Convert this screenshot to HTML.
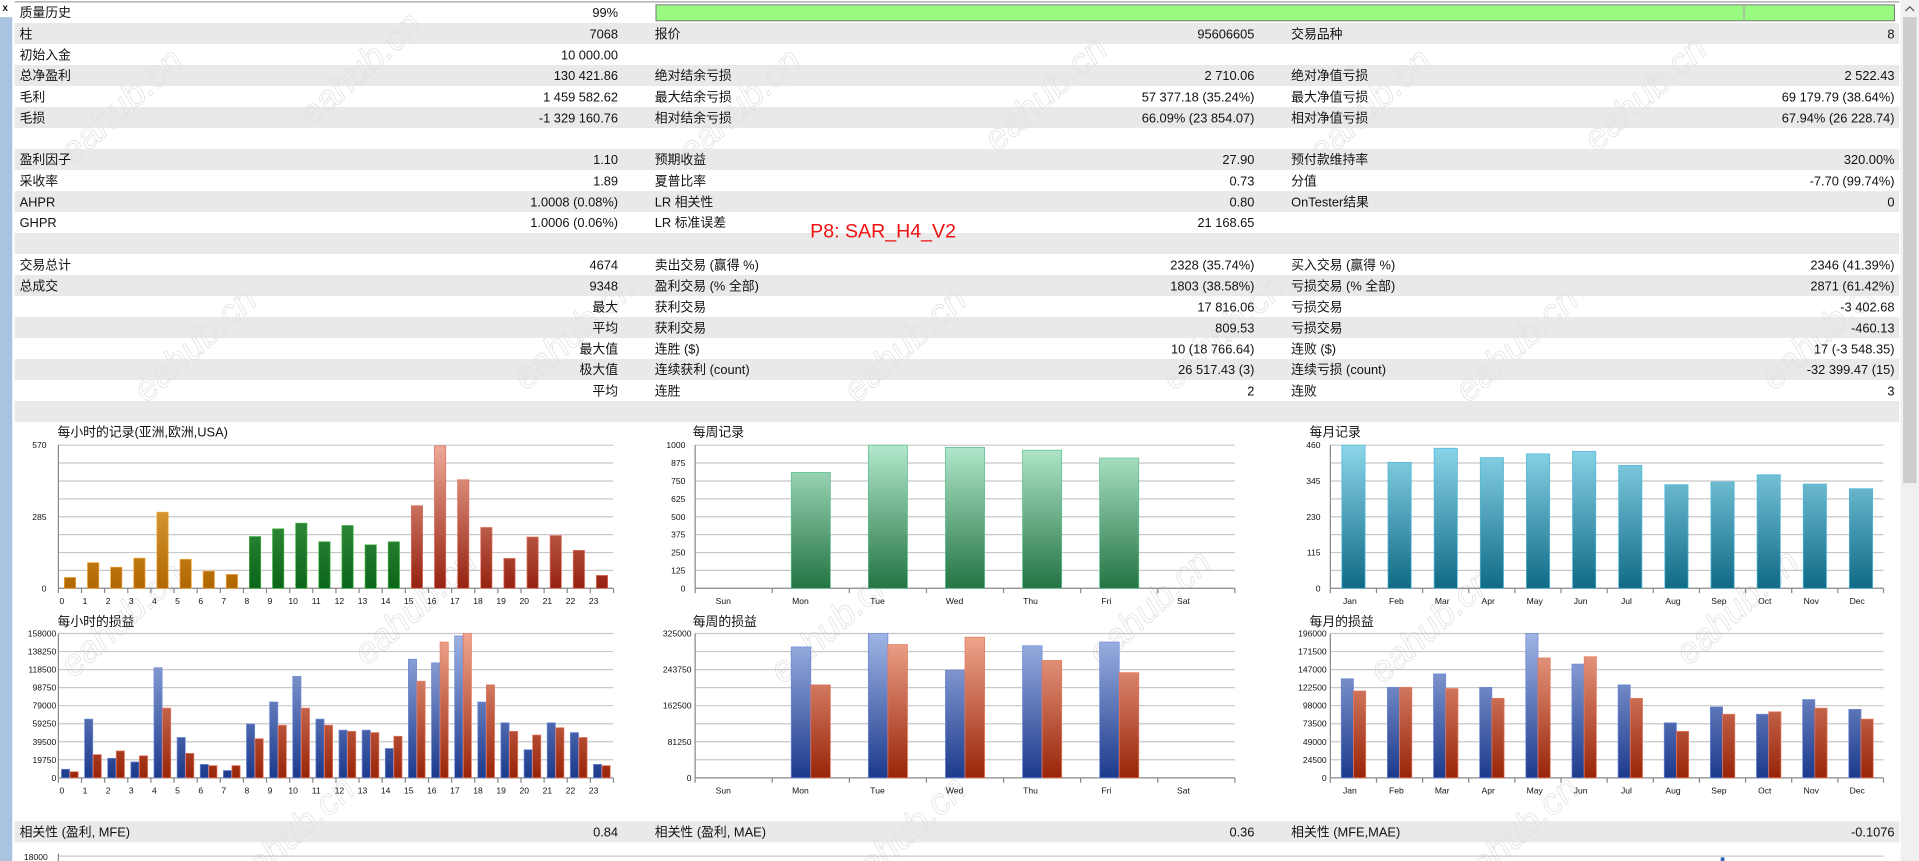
<!DOCTYPE html>
<html><head><meta charset="utf-8"><style>
html,body{margin:0;padding:0;background:#fff;overflow:hidden}
svg{display:block}
text{font-family:"Liberation Sans","Noto Sans CJK SC",sans-serif;fill:#111}
.t{font-size:10.5px}
.r{text-anchor:end}
.m{text-anchor:middle}
.ax{font-size:7px;fill:#222}
.g{stroke:#c8c8c8;stroke-width:1}
.wm{font-size:30px;font-style:italic;fill:none;stroke:#e0e0e0;stroke-width:0.6}
</style></head><body>
<svg width="1919" height="861" viewBox="0 0 1568 704" preserveAspectRatio="none" xmlns="http://www.w3.org/2000/svg">
<defs>
<linearGradient id="or" x1="0" y1="364" x2="0" y2="481" gradientUnits="userSpaceOnUse"><stop offset="0" stop-color="#f0c060"/><stop offset="1" stop-color="#b06600"/></linearGradient>
<linearGradient id="gr" x1="0" y1="364" x2="0" y2="481" gradientUnits="userSpaceOnUse"><stop offset="0" stop-color="#5aaa5a"/><stop offset="1" stop-color="#0a661a"/></linearGradient>
<linearGradient id="rd" x1="0" y1="364" x2="0" y2="481" gradientUnits="userSpaceOnUse"><stop offset="0" stop-color="#eeaa98"/><stop offset="1" stop-color="#952210"/></linearGradient>
<linearGradient id="wg" x1="0" y1="364" x2="0" y2="481" gradientUnits="userSpaceOnUse"><stop offset="0" stop-color="#b2e8cc"/><stop offset="1" stop-color="#247444"/></linearGradient>
<linearGradient id="cy" x1="0" y1="364" x2="0" y2="481" gradientUnits="userSpaceOnUse"><stop offset="0" stop-color="#8cd6ea"/><stop offset="1" stop-color="#106a86"/></linearGradient>
<linearGradient id="bl" x1="0" y1="518" x2="0" y2="636" gradientUnits="userSpaceOnUse"><stop offset="0" stop-color="#a0b4e4"/><stop offset="1" stop-color="#1c3a8c"/></linearGradient>
<linearGradient id="rr" x1="0" y1="518" x2="0" y2="636" gradientUnits="userSpaceOnUse"><stop offset="0" stop-color="#f0a890"/><stop offset="1" stop-color="#982408"/></linearGradient>
</defs>
<rect width="1568" height="704" fill="#fff"/>
<rect x="0" y="14" width="10" height="690" fill="#a9c3e0"/>
<text x="2" y="9" style="font-size:8px;font-weight:bold">x</text>
<line x1="12" y1="1.5" x2="1552" y2="1.5" stroke="#a0a0a0"/>
<rect x="1553" y="0" width="15" height="704" fill="#f0f0f0"/>
<rect x="1555" y="14" width="11" height="381" fill="#cdcdcd"/>
<path d="M1557 9 L1560.5 5.5 L1564 9" fill="none" stroke="#555" stroke-width="1"/>
<g fill="#e9e9e9">
<rect x="12" y="18.8" width="1540" height="17.2"/>
<rect x="12" y="53.1" width="1540" height="17.2"/>
<rect x="12" y="87.5" width="1540" height="17.2"/>
<rect x="12" y="121.8" width="1540" height="17.2"/>
<rect x="12" y="156.2" width="1540" height="17.2"/>
<rect x="12" y="190.5" width="1540" height="17.2"/>
<rect x="12" y="224.9" width="1540" height="17.2"/>
<rect x="12" y="259.2" width="1540" height="17.2"/>
<rect x="12" y="293.5" width="1540" height="17.2"/>
<rect x="12" y="327.9" width="1540" height="17.2"/>
<rect x="12" y="671.5" width="1540" height="17.2"/>
</g>
<rect x="536" y="4" width="1012" height="13" fill="#98fa80" stroke="#777" stroke-width="0.8"/>
<line x1="1425" y1="4" x2="1425" y2="17" stroke="#aaa"/>
<g>
<text class="wm" transform="translate(60,135) rotate(-42)">eahub.cn</text>
<text class="wm" transform="translate(255,105) rotate(-42)">eahub.cn</text>
<text class="wm" transform="translate(565,135) rotate(-42)">eahub.cn</text>
<text class="wm" transform="translate(815,125) rotate(-42)">eahub.cn</text>
<text class="wm" transform="translate(1080,135) rotate(-42)">eahub.cn</text>
<text class="wm" transform="translate(1305,125) rotate(-42)">eahub.cn</text>
<text class="wm" transform="translate(120,330) rotate(-42)">eahub.cn</text>
<text class="wm" transform="translate(430,320) rotate(-42)">eahub.cn</text>
<text class="wm" transform="translate(700,330) rotate(-42)">eahub.cn</text>
<text class="wm" transform="translate(960,320) rotate(-42)">eahub.cn</text>
<text class="wm" transform="translate(1200,330) rotate(-42)">eahub.cn</text>
<text class="wm" transform="translate(1450,320) rotate(-42)">eahub.cn</text>
<text class="wm" transform="translate(60,555) rotate(-42)">eahub.cn</text>
<text class="wm" transform="translate(300,545) rotate(-42)">eahub.cn</text>
<text class="wm" transform="translate(640,560) rotate(-42)">eahub.cn</text>
<text class="wm" transform="translate(900,545) rotate(-42)">eahub.cn</text>
<text class="wm" transform="translate(1130,560) rotate(-42)">eahub.cn</text>
<text class="wm" transform="translate(1380,545) rotate(-42)">eahub.cn</text>
<text class="wm" transform="translate(200,730) rotate(-42)">eahub.cn</text>
<text class="wm" transform="translate(700,730) rotate(-42)">eahub.cn</text>
<text class="wm" transform="translate(1200,730) rotate(-42)">eahub.cn</text>
</g>
<g class="t">
<text x="16" y="14.1">质量历史</text><text class="r" x="505" y="14.1">99%</text>
<text x="16" y="31.3">柱</text><text class="r" x="505" y="31.3">7068</text><text x="535" y="31.3">报价</text><text class="r" x="1025" y="31.3">95606605</text><text x="1055" y="31.3">交易品种</text><text class="r" x="1548" y="31.3">8</text>
<text x="16" y="48.5">初始入金</text><text class="r" x="505" y="48.5">10 000.00</text>
<text x="16" y="65.6">总净盈利</text><text class="r" x="505" y="65.6">130 421.86</text><text x="535" y="65.6">绝对结余亏损</text><text class="r" x="1025" y="65.6">2 710.06</text><text x="1055" y="65.6">绝对净值亏损</text><text class="r" x="1548" y="65.6">2 522.43</text>
<text x="16" y="82.8">毛利</text><text class="r" x="505" y="82.8">1 459 582.62</text><text x="535" y="82.8">最大结余亏损</text><text class="r" x="1025" y="82.8">57 377.18 (35.24%)</text><text x="1055" y="82.8">最大净值亏损</text><text class="r" x="1548" y="82.8">69 179.79 (38.64%)</text>
<text x="16" y="100">毛损</text><text class="r" x="505" y="100">-1 329 160.76</text><text x="535" y="100">相对结余亏损</text><text class="r" x="1025" y="100">66.09% (23 854.07)</text><text x="1055" y="100">相对净值亏损</text><text class="r" x="1548" y="100">67.94% (26 228.74)</text>
<text x="16" y="134.3">盈利因子</text><text class="r" x="505" y="134.3">1.10</text><text x="535" y="134.3">预期收益</text><text class="r" x="1025" y="134.3">27.90</text><text x="1055" y="134.3">预付款维持率</text><text class="r" x="1548" y="134.3">320.00%</text>
<text x="16" y="151.5">采收率</text><text class="r" x="505" y="151.5">1.89</text><text x="535" y="151.5">夏普比率</text><text class="r" x="1025" y="151.5">0.73</text><text x="1055" y="151.5">分值</text><text class="r" x="1548" y="151.5">-7.70 (99.74%)</text>
<text x="16" y="168.7">AHPR</text><text class="r" x="505" y="168.7">1.0008 (0.08%)</text><text x="535" y="168.7">LR 相关性</text><text class="r" x="1025" y="168.7">0.80</text><text x="1055" y="168.7">OnTester结果</text><text class="r" x="1548" y="168.7">0</text>
<text x="16" y="185.8">GHPR</text><text class="r" x="505" y="185.8">1.0006 (0.06%)</text><text x="535" y="185.8">LR 标准误差</text><text class="r" x="1025" y="185.8">21 168.65</text>
<text x="16" y="220.2">交易总计</text><text class="r" x="505" y="220.2">4674</text><text x="535" y="220.2">卖出交易 (赢得 %)</text><text class="r" x="1025" y="220.2">2328 (35.74%)</text><text x="1055" y="220.2">买入交易 (赢得 %)</text><text class="r" x="1548" y="220.2">2346 (41.39%)</text>
<text x="16" y="237.4">总成交</text><text class="r" x="505" y="237.4">9348</text><text x="535" y="237.4">盈利交易 (% 全部)</text><text class="r" x="1025" y="237.4">1803 (38.58%)</text><text x="1055" y="237.4">亏损交易 (% 全部)</text><text class="r" x="1548" y="237.4">2871 (61.42%)</text>
<text class="r" x="505" y="254.5">最大</text><text x="535" y="254.5">获利交易</text><text class="r" x="1025" y="254.5">17 816.06</text><text x="1055" y="254.5">亏损交易</text><text class="r" x="1548" y="254.5">-3 402.68</text>
<text class="r" x="505" y="271.7">平均</text><text x="535" y="271.7">获利交易</text><text class="r" x="1025" y="271.7">809.53</text><text x="1055" y="271.7">亏损交易</text><text class="r" x="1548" y="271.7">-460.13</text>
<text class="r" x="505" y="288.9">最大值</text><text x="535" y="288.9">连胜 ($)</text><text class="r" x="1025" y="288.9">10 (18 766.64)</text><text x="1055" y="288.9">连败 ($)</text><text class="r" x="1548" y="288.9">17 (-3 548.35)</text>
<text class="r" x="505" y="306">极大值</text><text x="535" y="306">连续获利 (count)</text><text class="r" x="1025" y="306">26 517.43 (3)</text><text x="1055" y="306">连续亏损 (count)</text><text class="r" x="1548" y="306">-32 399.47 (15)</text>
<text class="r" x="505" y="323.2">平均</text><text x="535" y="323.2">连胜</text><text class="r" x="1025" y="323.2">2</text><text x="1055" y="323.2">连败</text><text class="r" x="1548" y="323.2">3</text>
<text x="16" y="684">相关性 (盈利, MFE)</text><text class="r" x="505" y="684">0.84</text><text x="535" y="684">相关性 (盈利, MAE)</text><text class="r" x="1025" y="684">0.36</text><text x="1055" y="684">相关性 (MFE,MAE)</text><text class="r" x="1548" y="684">-0.1076</text>
</g>
<text x="662" y="194" style="font-size:16px;fill:#f01010">P8: SAR_H4_V2</text>

<g class="t">
<text x="47" y="357">每小时的记录(亚洲,欧洲,USA)</text>
<text x="566" y="357">每周记录</text>
<text x="1070" y="357">每月记录</text>
<text x="47" y="512">每小时的损益</text>
<text x="566" y="512">每周的损益</text>
<text x="1070" y="512">每月的损益</text>
</g>

<g class="g">
<path d="M47.7 364H501M47.7 378.6H501M47.7 393.3H501M47.7 407.9H501M47.7 422.5H501M47.7 437.1H501M47.7 451.8H501M47.7 466.4H501"/>
<path d="M568 364H1009M568 378.6H1009M568 393.3H1009M568 407.9H1009M568 422.5H1009M568 437.1H1009M568 451.8H1009M568 466.4H1009"/>
<path d="M1087 364H1539M1087 378.6H1539M1087 393.3H1539M1087 407.9H1539M1087 422.5H1539M1087 437.1H1539M1087 451.8H1539M1087 466.4H1539"/>
<path d="M47.7 518H501M47.7 532.75H501M47.7 547.5H501M47.7 562.25H501M47.7 577H501M47.7 591.75H501M47.7 606.5H501M47.7 621.25H501"/>
<path d="M568 518H1009M568 532.75H1009M568 547.5H1009M568 562.25H1009M568 577H1009M568 591.75H1009M568 606.5H1009M568 621.25H1009"/>
<path d="M1087 518H1539M1087 532.75H1539M1087 547.5H1539M1087 562.25H1539M1087 577H1539M1087 591.75H1539M1087 606.5H1539M1087 621.25H1539"/>
<path d="M47.7 700H1539"/>
</g>
<g stroke="#888" stroke-width="1" fill="none">
<path d="M47.7 364V485M47.7 481H501"/>
<path d="M568 364V485M568 481H1009"/>
<path d="M1087 364V485M1087 481H1539"/>
<path d="M47.7 518V640M47.7 636H501"/>
<path d="M568 518V640M568 636H1009"/>
<path d="M1087 518V640M1087 636H1539"/>
<path d="M47.7 698V704"/>
<path d="M66.6 481v4M85.5 481v4M104.4 481v4M123.3 481v4M142.2 481v4M161.1 481v4M180 481v4M198.9 481v4M217.8 481v4M236.7 481v4M255.6 481v4M274.5 481v4M293.4 481v4M312.3 481v4M331.2 481v4M350.1 481v4M369 481v4M387.9 481v4M406.8 481v4M425.7 481v4M444.6 481v4M463.5 481v4M482.4 481v4M501.3 481v4"/>
<path d="M66.6 636v4M85.5 636v4M104.4 636v4M123.3 636v4M142.2 636v4M161.1 636v4M180 636v4M198.9 636v4M217.8 636v4M236.7 636v4M255.6 636v4M274.5 636v4M293.4 636v4M312.3 636v4M331.2 636v4M350.1 636v4M369 636v4M387.9 636v4M406.8 636v4M425.7 636v4M444.6 636v4M463.5 636v4M482.4 636v4M501.3 636v4"/>
<path d="M631 481v4M694 481v4M757 481v4M820 481v4M883 481v4M946 481v4M1009 481v4"/>
<path d="M631 636v4M694 636v4M757 636v4M820 636v4M883 636v4M946 636v4M1009 636v4"/>
<path d="M1124.7 481v4M1162.4 481v4M1200.1 481v4M1237.8 481v4M1275.5 481v4M1313.2 481v4M1350.9 481v4M1388.6 481v4M1426.3 481v4M1464 481v4M1501.7 481v4M1539 481v4"/>
<path d="M1124.7 636v4M1162.4 636v4M1200.1 636v4M1237.8 636v4M1275.5 636v4M1313.2 636v4M1350.9 636v4M1388.6 636v4M1426.3 636v4M1464 636v4M1501.7 636v4M1539 636v4"/>
</g>

<g class="ax r">
<text x="38" y="366.5">570</text><text x="38" y="425">285</text><text x="38" y="483.5">0</text>
<text x="560" y="366.5">1000</text><text x="560" y="381.1">875</text><text x="560" y="395.8">750</text><text x="560" y="410.4">625</text><text x="560" y="425">500</text><text x="560" y="439.6">375</text><text x="560" y="454.3">250</text><text x="560" y="468.9">125</text><text x="560" y="483.5">0</text>
<text x="1079" y="366.5">460</text><text x="1079" y="395.8">345</text><text x="1079" y="425">230</text><text x="1079" y="454.3">115</text><text x="1079" y="483.5">0</text>
<text x="46" y="520.5">158000</text><text x="46" y="535.2">138250</text><text x="46" y="550">118500</text><text x="46" y="564.7">98750</text><text x="46" y="579.5">79000</text><text x="46" y="594.2">59250</text><text x="46" y="609">39500</text><text x="46" y="623.7">19750</text><text x="46" y="638.5">0</text>
<text x="565" y="520.5">325000</text><text x="565" y="550">243750</text><text x="565" y="579.5">162500</text><text x="565" y="609">81250</text><text x="565" y="638.5">0</text>
<text x="1084" y="520.5">196000</text><text x="1084" y="535.2">171500</text><text x="1084" y="550">147000</text><text x="1084" y="564.7">122500</text><text x="1084" y="579.5">98000</text><text x="1084" y="594.2">73500</text><text x="1084" y="609">49000</text><text x="1084" y="623.7">24500</text><text x="1084" y="638.5">0</text>
<text x="39" y="703">18000</text>
</g>

<g class="ax m">
<text x="50.6" y="494">0</text><text x="69.5" y="494">1</text><text x="88.4" y="494">2</text><text x="107.3" y="494">3</text><text x="126.2" y="494">4</text><text x="145.1" y="494">5</text><text x="164" y="494">6</text><text x="182.8" y="494">7</text><text x="201.7" y="494">8</text><text x="220.6" y="494">9</text><text x="239.5" y="494">10</text><text x="258.4" y="494">11</text><text x="277.3" y="494">12</text><text x="296.2" y="494">13</text><text x="315.1" y="494">14</text><text x="334" y="494">15</text><text x="352.8" y="494">16</text><text x="371.7" y="494">17</text><text x="390.6" y="494">18</text><text x="409.5" y="494">19</text><text x="428.4" y="494">20</text><text x="447.3" y="494">21</text><text x="466.2" y="494">22</text><text x="485.1" y="494">23</text>
<text x="50.6" y="649">0</text><text x="69.5" y="649">1</text><text x="88.4" y="649">2</text><text x="107.3" y="649">3</text><text x="126.2" y="649">4</text><text x="145.1" y="649">5</text><text x="164" y="649">6</text><text x="182.8" y="649">7</text><text x="201.7" y="649">8</text><text x="220.6" y="649">9</text><text x="239.5" y="649">10</text><text x="258.4" y="649">11</text><text x="277.3" y="649">12</text><text x="296.2" y="649">13</text><text x="315.1" y="649">14</text><text x="334" y="649">15</text><text x="352.8" y="649">16</text><text x="371.7" y="649">17</text><text x="390.6" y="649">18</text><text x="409.5" y="649">19</text><text x="428.4" y="649">20</text><text x="447.3" y="649">21</text><text x="466.2" y="649">22</text><text x="485.1" y="649">23</text>
<text x="591" y="494">Sun</text><text x="654" y="494">Mon</text><text x="717" y="494">Tue</text><text x="780" y="494">Wed</text><text x="842" y="494">Thu</text><text x="904" y="494">Fri</text><text x="967" y="494">Sat</text>
<text x="591" y="649">Sun</text><text x="654" y="649">Mon</text><text x="717" y="649">Tue</text><text x="780" y="649">Wed</text><text x="842" y="649">Thu</text><text x="904" y="649">Fri</text><text x="967" y="649">Sat</text>
<text x="1103" y="494">Jan</text><text x="1141" y="494">Feb</text><text x="1178.5" y="494">Mar</text><text x="1216" y="494">Apr</text><text x="1254" y="494">May</text><text x="1291.5" y="494">Jun</text><text x="1329" y="494">Jul</text><text x="1367" y="494">Aug</text><text x="1404.5" y="494">Sep</text><text x="1442" y="494">Oct</text><text x="1480" y="494">Nov</text><text x="1517.5" y="494">Dec</text>
<text x="1103" y="649">Jan</text><text x="1141" y="649">Feb</text><text x="1178.5" y="649">Mar</text><text x="1216" y="649">Apr</text><text x="1254" y="649">May</text><text x="1291.5" y="649">Jun</text><text x="1329" y="649">Jul</text><text x="1367" y="649">Aug</text><text x="1404.5" y="649">Sep</text><text x="1442" y="649">Oct</text><text x="1480" y="649">Nov</text><text x="1517.5" y="649">Dec</text>
</g>

<g fill="url(#or)" stroke="#f0a030" stroke-width="0.6">
<rect x="52.6" y="472.2" width="9.2" height="8.8"/>
<rect x="71.5" y="460.1" width="9.2" height="20.9"/>
<rect x="90.4" y="463.8" width="9.2" height="17.2"/>
<rect x="109.3" y="456.4" width="9.2" height="24.6"/>
<rect x="128.2" y="418.8" width="9.2" height="62.2"/>
<rect x="147.1" y="457.4" width="9.2" height="23.6"/>
<rect x="166" y="467" width="9.2" height="14"/>
<rect x="184.9" y="469.7" width="9.2" height="11.3"/>
</g>
<g fill="url(#gr)" stroke="#40b040" stroke-width="0.6">
<rect x="203.8" y="438.7" width="9.2" height="42.3"/>
<rect x="222.7" y="432.4" width="9.2" height="48.6"/>
<rect x="241.6" y="427.8" width="9.2" height="53.2"/>
<rect x="260.5" y="443" width="9.2" height="38"/>
<rect x="279.4" y="429.7" width="9.2" height="51.3"/>
<rect x="298.3" y="445.5" width="9.2" height="35.5"/>
<rect x="317.2" y="443" width="9.2" height="38"/>
</g>
<g fill="url(#rd)" stroke="#e07060" stroke-width="0.6">
<rect x="336.1" y="413.5" width="9.2" height="67.5"/>
<rect x="355" y="364.6" width="9.2" height="116.4"/>
<rect x="373.9" y="392.3" width="9.2" height="88.7"/>
<rect x="392.8" y="431.3" width="9.2" height="49.7"/>
<rect x="411.7" y="456.6" width="9.2" height="24.4"/>
<rect x="430.6" y="439.1" width="9.2" height="41.9"/>
<rect x="449.5" y="437.9" width="9.2" height="43.1"/>
<rect x="468.4" y="450" width="9.2" height="31"/>
<rect x="487.3" y="470.5" width="9.2" height="10.5"/>
</g>

<g fill="url(#wg)" stroke="#60c090" stroke-width="0.6">
<rect x="646.5" y="386.2" width="32" height="94.8"/>
<rect x="709.5" y="364" width="32" height="117"/>
<rect x="772.5" y="365.8" width="32" height="115.2"/>
<rect x="835.5" y="368.1" width="32" height="112.9"/>
<rect x="898.5" y="374.5" width="32" height="106.5"/>
</g>

<g fill="url(#cy)" stroke="#50b8d8" stroke-width="0.6">
<rect x="1096.4" y="364" width="19" height="117"/>
<rect x="1134.1" y="378" width="19" height="103"/>
<rect x="1171.8" y="366.5" width="19" height="114.5"/>
<rect x="1209.5" y="374.2" width="19" height="106.8"/>
<rect x="1247.2" y="371.1" width="19" height="109.9"/>
<rect x="1284.9" y="369.1" width="19" height="111.9"/>
<rect x="1322.6" y="380.5" width="19" height="100.5"/>
<rect x="1360.3" y="396.3" width="19" height="84.7"/>
<rect x="1398" y="394" width="19" height="87"/>
<rect x="1435.7" y="388.2" width="19" height="92.8"/>
<rect x="1473.4" y="395.8" width="19" height="85.2"/>
<rect x="1511.1" y="399.6" width="19" height="81.4"/>
</g>

<g fill="url(#bl)" stroke="#6e8ad8" stroke-width="0.6">
<rect x="50.2" y="629" width="6.7" height="7"/>
<rect x="69.1" y="588" width="6.7" height="48"/>
<rect x="88" y="620" width="6.7" height="16"/>
<rect x="106.9" y="623" width="6.7" height="13"/>
<rect x="125.8" y="546" width="6.7" height="90"/>
<rect x="144.7" y="603" width="6.7" height="33"/>
<rect x="163.6" y="625" width="6.7" height="11"/>
<rect x="182.5" y="630" width="6.7" height="6"/>
<rect x="201.4" y="592" width="6.7" height="44"/>
<rect x="220.3" y="574" width="6.7" height="62"/>
<rect x="239.2" y="553" width="6.7" height="83"/>
<rect x="258.1" y="588" width="6.7" height="48"/>
<rect x="277" y="597" width="6.7" height="39"/>
<rect x="295.9" y="597" width="6.7" height="39"/>
<rect x="314.8" y="612" width="6.7" height="24"/>
<rect x="333.7" y="539" width="6.7" height="97"/>
<rect x="352.6" y="542" width="6.7" height="94"/>
<rect x="371.5" y="520" width="6.7" height="116"/>
<rect x="390.4" y="574" width="6.7" height="62"/>
<rect x="409.3" y="591" width="6.7" height="45"/>
<rect x="428.2" y="613" width="6.7" height="23"/>
<rect x="447.1" y="591" width="6.7" height="45"/>
<rect x="466" y="599" width="6.7" height="37"/>
<rect x="484.9" y="625" width="6.7" height="11"/>
</g>
<g fill="url(#rr)" stroke="#e87860" stroke-width="0.6">
<rect x="57.2" y="631" width="6.7" height="5"/>
<rect x="76.1" y="617" width="6.7" height="19"/>
<rect x="95" y="614" width="6.7" height="22"/>
<rect x="113.9" y="618" width="6.7" height="18"/>
<rect x="132.8" y="579" width="6.7" height="57"/>
<rect x="151.7" y="616" width="6.7" height="20"/>
<rect x="170.6" y="626" width="6.7" height="10"/>
<rect x="189.5" y="626" width="6.7" height="10"/>
<rect x="208.4" y="604" width="6.7" height="32"/>
<rect x="227.3" y="593" width="6.7" height="43"/>
<rect x="246.2" y="579" width="6.7" height="57"/>
<rect x="265.1" y="593" width="6.7" height="43"/>
<rect x="284" y="598" width="6.7" height="38"/>
<rect x="302.9" y="599" width="6.7" height="37"/>
<rect x="321.8" y="602" width="6.7" height="34"/>
<rect x="340.7" y="557" width="6.7" height="79"/>
<rect x="359.6" y="525" width="6.7" height="111"/>
<rect x="378.5" y="518" width="6.7" height="118"/>
<rect x="397.4" y="560" width="6.7" height="76"/>
<rect x="416.3" y="598" width="6.7" height="38"/>
<rect x="435.2" y="601" width="6.7" height="35"/>
<rect x="454.1" y="595" width="6.7" height="41"/>
<rect x="473" y="603" width="6.7" height="33"/>
<rect x="491.9" y="626" width="6.7" height="10"/>
</g>

<g fill="url(#bl)" stroke="#6e8ad8" stroke-width="0.6">
<rect x="646.5" y="529" width="16" height="107"/>
<rect x="709.5" y="518" width="16" height="118"/>
<rect x="772.5" y="548" width="16" height="88"/>
<rect x="835.5" y="528" width="16" height="108"/>
<rect x="898.5" y="525" width="16" height="111"/>
</g>
<g fill="url(#rr)" stroke="#e87860" stroke-width="0.6">
<rect x="662.5" y="560" width="16" height="76"/>
<rect x="725.5" y="527" width="16" height="109"/>
<rect x="788.5" y="521" width="16" height="115"/>
<rect x="851.5" y="540" width="16" height="96"/>
<rect x="914.5" y="550" width="16" height="86"/>
</g>

<g fill="url(#bl)" stroke="#6e8ad8" stroke-width="0.6">
<rect x="1095.9" y="555" width="10" height="81"/>
<rect x="1133.6" y="562" width="10" height="74"/>
<rect x="1171.3" y="551" width="10" height="85"/>
<rect x="1209" y="562" width="10" height="74"/>
<rect x="1246.7" y="518" width="10" height="118"/>
<rect x="1284.4" y="543" width="10" height="93"/>
<rect x="1322.1" y="560" width="10" height="76"/>
<rect x="1359.8" y="591" width="10" height="45"/>
<rect x="1397.5" y="578" width="10" height="58"/>
<rect x="1435.2" y="584" width="10" height="52"/>
<rect x="1472.9" y="572" width="10" height="64"/>
<rect x="1510.6" y="580" width="10" height="56"/>
</g>
<g fill="url(#rr)" stroke="#e87860" stroke-width="0.6">
<rect x="1105.9" y="565" width="10" height="71"/>
<rect x="1143.6" y="562" width="10" height="74"/>
<rect x="1181.3" y="563" width="10" height="73"/>
<rect x="1219" y="571" width="10" height="65"/>
<rect x="1256.7" y="538" width="10" height="98"/>
<rect x="1294.4" y="537" width="10" height="99"/>
<rect x="1332.1" y="571" width="10" height="65"/>
<rect x="1369.8" y="598" width="10" height="38"/>
<rect x="1407.5" y="584" width="10" height="52"/>
<rect x="1445.2" y="582" width="10" height="54"/>
<rect x="1482.9" y="579" width="10" height="57"/>
<rect x="1520.6" y="588" width="10" height="48"/>
</g>
<rect x="1406" y="701" width="3" height="3" fill="#3060c0"/>
</svg>
</body></html>
